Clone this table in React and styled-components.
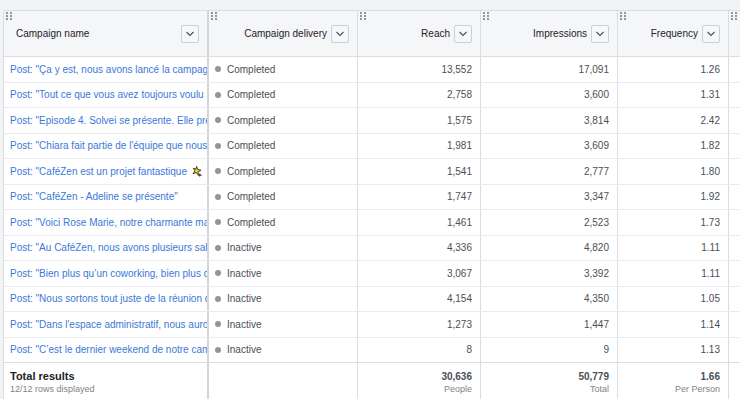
import React from 'react'
import styled, { createGlobalStyle } from 'styled-components'

const GlobalStyle = createGlobalStyle`
    html, body {
        margin: 0;
        padding: 0;
        background: #ffffff;
        font-family: "Liberation Sans", Arial, sans-serif;
        overflow: hidden;
    }
`;

const COLS = '205px 149px 123px 137px 111px 120px';

const rows = [
    { name: 'Post: "Ça y est, nous avons lancé la campagne de financement participatif', status: 'Completed', reach: '13,552', imp: '17,091', freq: '1.26' },
    { name: 'Post: "Tout ce que vous avez toujours voulu savoir sur le CaféZen', status: 'Completed', reach: '2,758', imp: '3,600', freq: '1.31' },
    { name: 'Post: "Episode 4. Solvei se présente. Elle prend soin de nos', status: 'Completed', reach: '1,575', imp: '3,814', freq: '2.42' },
    { name: 'Post: "Chiara fait partie de l\'équipe que nous avons', status: 'Completed', reach: '1,981', imp: '3,609', freq: '1.82' },
    { name: 'Post: "CaféZen est un projet fantastique', emoji: true, tail: ' Avec nous', status: 'Completed', reach: '1,541', imp: '2,777', freq: '1.80' },
    { name: 'Post: "CaféZen - Adeline se présente"', status: 'Completed', reach: '1,747', imp: '3,347', freq: '1.92' },
    { name: 'Post: "Voici Rose Marie, notre charmante maman', status: 'Completed', reach: '1,461', imp: '2,523', freq: '1.73' },
    { name: 'Post: "Au CaféZen, nous avons plusieurs salles de réunion', status: 'Inactive', reach: '4,336', imp: '4,820', freq: '1.11' },
    { name: 'Post: "Bien plus qu\u2019un coworking, bien plus qu\u2019un café', status: 'Inactive', reach: '3,067', imp: '3,392', freq: '1.11' },
    { name: 'Post: "Nous sortons tout juste de la réunion de lancement', status: 'Inactive', reach: '4,154', imp: '4,350', freq: '1.05' },
    { name: 'Post: "Dans l\'espace administratif, nous aurons', status: 'Inactive', reach: '1,273', imp: '1,447', freq: '1.14' },
    { name: 'Post: "C\u2019est le dernier weekend de notre campagne', status: 'Inactive', reach: '8', imp: '9', freq: '1.13' },
];

function Chevron() {
    return (
        <svg width="10" height="6" viewBox="0 0 10 6">
            <path d="M1.5 1 L5 4.5 L8.5 1" fill="none" stroke="#4b4f56" strokeWidth="1.1" />
        </svg>
    );
}

function Handle() {
    return (
        <HandleDots width="6" height="8" viewBox="0 0 6 8">
            {[0, 3, 6].map((y) => (
                <g key={y}>
                    <rect x="0" y={y} width="2" height="2" fill="#90949c" />
                    <rect x="4" y={y} width="2" height="2" fill="#90949c" />
                </g>
            ))}
        </HandleDots>
    );
}

function Sparkle() {
    return (
        <Emoji width="11" height="11" viewBox="0 0 12 12">
            <path d="M5 0.5 L6.3 3.8 L9.8 4.6 L6.6 6.2 L6.8 10 L4.7 7.2 L1.2 8.4 L3.2 5.4 L1.4 2.5 L4.4 3.4 Z" fill="#f5d416" stroke="#222" strokeWidth="0.9" />
            <path d="M8.5 7.5 L9.3 9.3 L11.3 10 L9.3 10.6 L8.5 12 L7.8 10.6 L6 10 L7.8 9.3 Z" fill="#333" />
        </Emoji>
    );
}

function HeaderCell({ title, align, first }) {
    return (
        <HeadCell align={align} first={first}>
            <Handle />
            <HeadTitle>{title}</HeadTitle>
            <DropButton><Chevron /></DropButton>
        </HeadCell>
    );
}

function App() {
    return (
        <>
            <GlobalStyle />
            <Page>
                <Table>
                    <HeaderRow>
                        <HeaderCell title="Campaign name" align="left" first />
                        <HeaderCell title="Campaign delivery" align="right" />
                        <HeaderCell title="Reach" align="right" />
                        <HeaderCell title="Impressions" align="right" />
                        <HeaderCell title="Frequency" align="right" />
                        <HeadCell align="right"><Handle /></HeadCell>
                    </HeaderRow>
                    {rows.map((r, i) => (
                        <BodyRow key={i}>
                            <NameCell first>
                                <PostLink>
                                    {r.name}
                                    {r.emoji && <> <Sparkle />{r.tail}</>}
                                </PostLink>
                            </NameCell>
                            <StatusCell>
                                <Dot />
                                {r.status}
                            </StatusCell>
                            <NumCell>{r.reach}</NumCell>
                            <NumCell>{r.imp}</NumCell>
                            <NumCell>{r.freq}</NumCell>
                            <NumCell />
                        </BodyRow>
                    ))}
                    <FooterRow>
                        <FootCell first>
                            <TotalTitle>Total results</TotalTitle>
                            <SubText>12/12 rows displayed</SubText>
                        </FootCell>
                        <FootCell />
                        <FootCell right>
                            <TotalValue>30,636</TotalValue>
                            <SubText>People</SubText>
                        </FootCell>
                        <FootCell right>
                            <TotalValue>50,779</TotalValue>
                            <SubText>Total</SubText>
                        </FootCell>
                        <FootCell right>
                            <TotalValue>1.66</TotalValue>
                            <SubText>Per Person</SubText>
                        </FootCell>
                        <FootCell />
                    </FooterRow>
                </Table>
            </Page>
        </>
    );
}

const Page = styled.div`
    width: 740px;
    height: 399px;
    overflow: hidden;
    background: #f2f3f5;
    padding-top: 10px;
    box-sizing: border-box;
`;

const Table = styled.div`
    margin-left: 3px;
    border-left: 1px solid #dadde1;
    border-top: 1px solid #dadde1;
    background: #ffffff;
    width: max-content;
`;

const Row = styled.div`
    display: grid;
    grid-template-columns: ${COLS};
`;

const HeaderRow = styled(Row)`
    height: 45px;
    background: #f5f6f7;
    border-bottom: 1px solid #dadde1;
`;

const BodyRow = styled(Row)`
    height: 25.5px;
    box-sizing: border-box;
    border-bottom: 1px solid #e9ebee;
`;

const FooterRow = styled(Row)`
    height: 40px;
    border-top: 1px solid #dadde1;
    margin-top: -1px;
`;

const Cell = styled.div`
    position: relative;
    box-sizing: border-box;
    min-width: 0;
    border-right: ${(p) => (p.first ? '2px solid #d3d6db' : '1px solid #dadde1')};
    overflow: hidden;
    white-space: nowrap;
    font-size: 10px;
`;

const HeadCell = styled(Cell)`
    display: flex;
    align-items: center;
    justify-content: ${(p) => (p.align === 'left' ? 'space-between' : 'flex-end')};
    gap: 4px;
    padding: 0 8px 0 12px;
    color: #1d2129;
`;

const HandleDots = styled.svg`
    position: absolute;
    left: 2px;
    top: 1px;
`;

const HeadTitle = styled.span`
    font-size: 10px;
    color: #1d2129;
`;

const DropButton = styled.div`
    width: 18px;
    height: 18px;
    box-sizing: border-box;
    border: 1px solid #ccd0d5;
    border-radius: 2px;
    background: #f6f7f9;
    display: flex;
    align-items: center;
    justify-content: center;
    flex-shrink: 0;
`;

const NameCell = styled(Cell)`
    display: flex;
    align-items: center;
    padding-left: 6px;
`;

const PostLink = styled.span`
    color: #3b78d8;
    display: inline-flex;
    align-items: center;
    white-space: pre;
`;

const Emoji = styled.svg`
    margin: 0 2px;
    flex-shrink: 0;
`;

const StatusCell = styled(Cell)`
    display: flex;
    align-items: center;
    gap: 6px;
    padding-left: 6px;
    color: #4b4f56;
`;

const Dot = styled.span`
    width: 6px;
    height: 6px;
    border-radius: 50%;
    background: #90949c;
    flex-shrink: 0;
`;

const NumCell = styled(Cell)`
    display: flex;
    align-items: center;
    justify-content: flex-end;
    padding-right: 8px;
    color: #4b4f56;
`;

const FootCell = styled(Cell)`
    display: flex;
    flex-direction: column;
    align-items: ${(p) => (p.right ? 'flex-end' : 'flex-start')};
    padding: 7px 8px 0 ${(p) => (p.first ? '6px' : '0')};
`;

const TotalTitle = styled.div`
    font-size: 11px;
    font-weight: bold;
    color: #1d2129;
    line-height: 13px;
`;

const TotalValue = styled.div`
    font-size: 10px;
    font-weight: bold;
    color: #4b4f56;
    line-height: 13px;
`;

const SubText = styled.div`
    font-size: 9px;
    color: #7f8389;
    line-height: 13px;
`;

export default App;
